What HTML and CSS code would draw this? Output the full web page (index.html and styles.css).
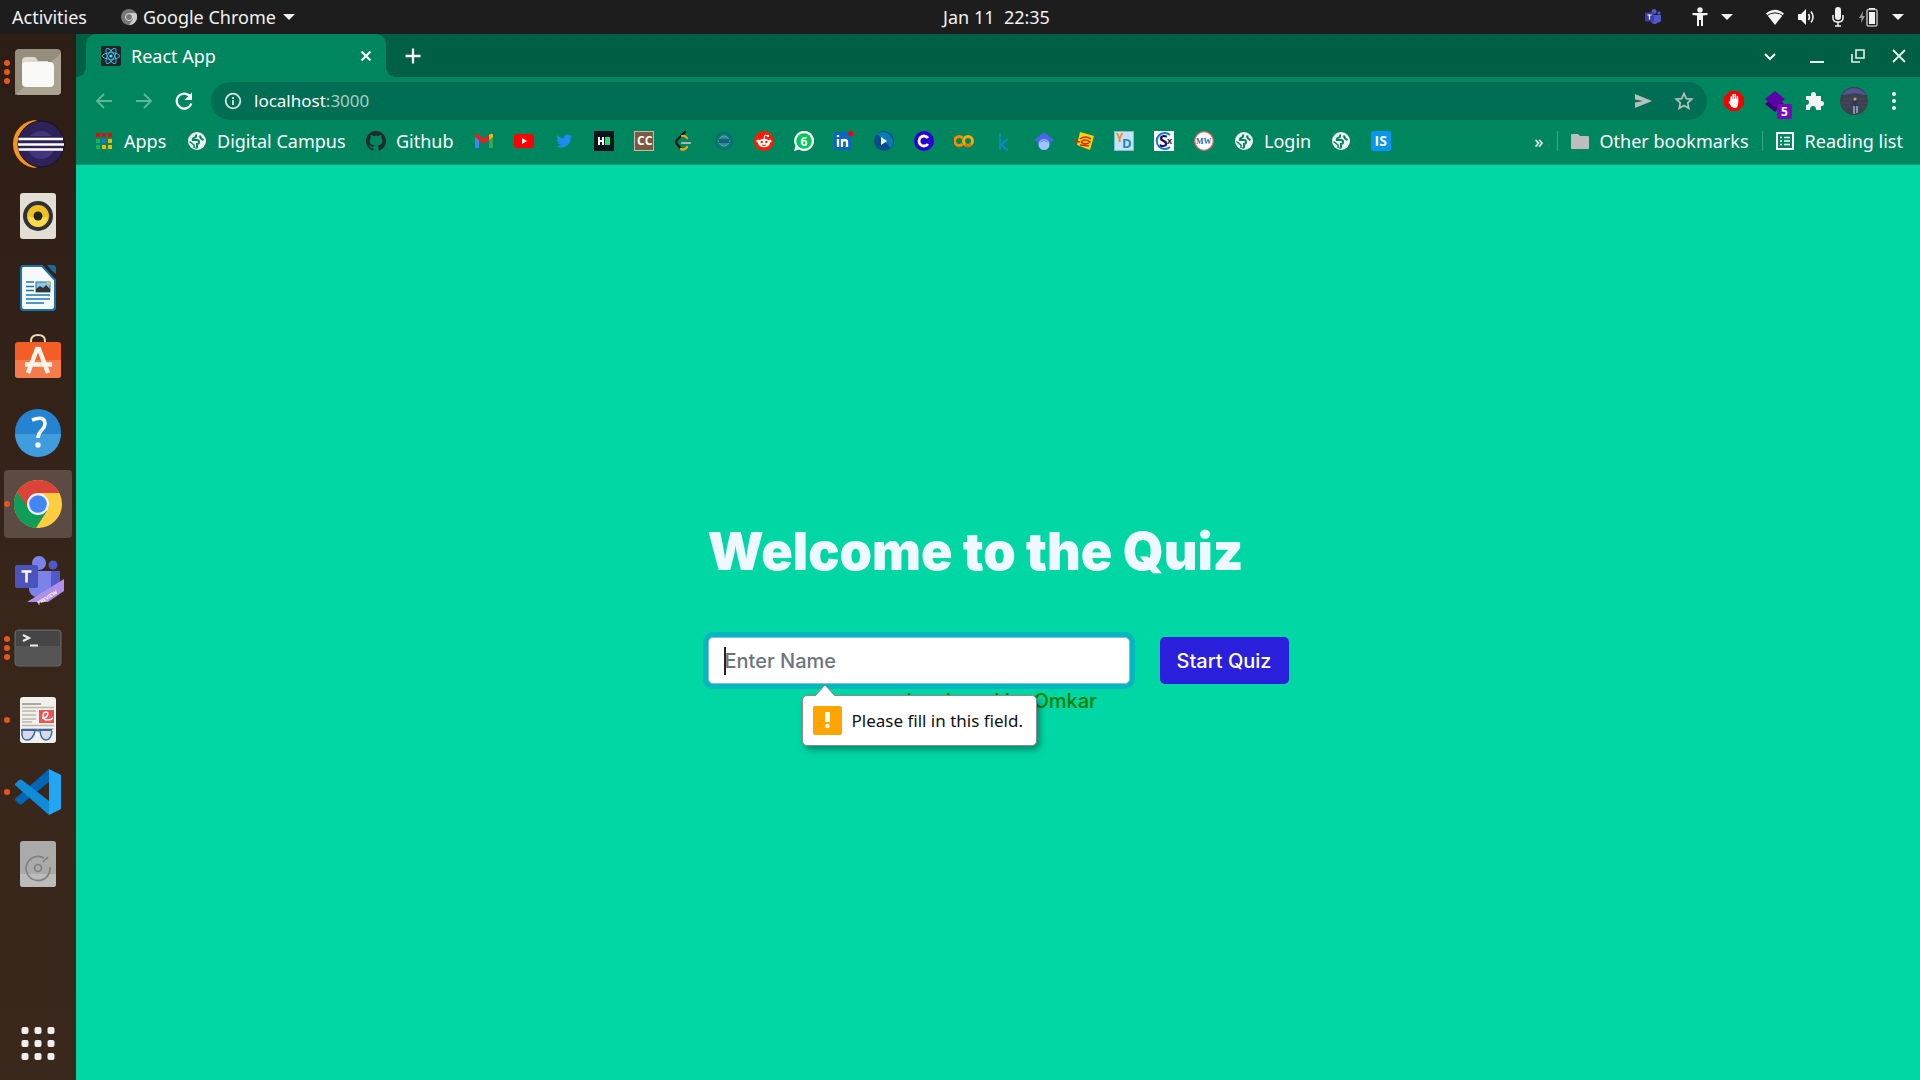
FILE: index.html
```html
<!DOCTYPE html>
<html lang="en">
<head>
<meta charset="utf-8">
<meta name="viewport" content="width=device-width, initial-scale=1">
<title>React App</title>
<link rel="stylesheet" href="styles.css">
</head>
<body>
<svg class="defs" aria-hidden="true">
  <symbol id="globe" viewBox="0 0 20 20"><circle cx="10" cy="10" r="9" fill="#f1f3f4"/><path d="M9 3.500Q9.500 6 8 6.500Q5.500 7 6 9h4q2 0 2 2t-2 2v2.500Q10 17 8.500 17M13 4.500q0 3 3.500 4.500" fill="none" stroke="#00865f" stroke-width="2"/><path d="M2.500 10.500L7 14v3" fill="none" stroke="#00865f" stroke-width="1.500"/></symbol>
  <symbol id="caret" viewBox="0 0 14 8"><path d="M1 1h12L7 7z" fill="#f2f2f2"/></symbol>
</svg>
<header class="topbar">
  <div class="topbar-left">
    <button class="plain">Activities</button>
    <button class="plain app-menu">
      <svg width="16" height="16" viewBox="0 0 16 16"><circle cx="8" cy="8" r="8" fill="#777"/><path d="M8 4h7a8 8 0 0 1-7 12l4-6z" fill="#ccc"/><circle cx="8" cy="8" r="3.500" fill="#777" stroke="#ddd" stroke-width="1"/></svg>
      Google Chrome
      <svg width="14" height="8"><use href="#caret"/></svg>
    </button>
  </div>
  <time class="clock">Jan 11&nbsp; 22:35</time>
  <div class="status">
    <svg width="16" height="16" viewBox="0 0 16 16"><circle cx="9" cy="2.500" r="2.500" fill="#5059c9"/><circle cx="14" cy="4" r="1.700" fill="#4b53bc"/><path d="M6 6h10v5q0 3-3 2.500Q9 17 6 13z" fill="#5059c9"/><rect y="3.500" width="9" height="9" rx="1" fill="#3940ab"/><path d="M2.500 6h4M4.500 6v4.500" stroke="#fff" stroke-width="1.200"/></svg>
    <div class="status-group">
      <svg width="16" height="20" viewBox="0 0 16 20" fill="#f2f2f2"><circle cx="8" cy="3" r="2.700"/><path d="M.500 6h15v2L11 8.500V19H9v-6H7v6H5V8.500L.500 8z"/></svg>
      <svg width="14" height="8"><use href="#caret"/></svg>
    </div>
    <div class="status-group">
      <svg width="20" height="18" viewBox="0 0 20 18"><path d="M1 5.500Q10-2 19 5.500L10 17z" fill="#f2f2f2"/><path d="M1 6.200Q10-.500 19 6.200" stroke="#1d1d1d" stroke-width="1" fill="none" transform="translate(0 2)"/></svg>
      <svg width="20" height="18" viewBox="0 0 20 18"><path d="M1 6h3l5-5v16l-5-5H1z" fill="#f2f2f2"/><path d="M11.500 6q2 3 0 6M14 3.500q4 5.500 0 11" fill="none" stroke="#f2f2f2" stroke-width="1.600"/></svg>
      <svg width="18" height="20" viewBox="0 0 18 20"><rect x="6" y="0" width="6" height="13" rx="3" fill="#f2f2f2"/><path d="M4 8v3q0 4 5 4t5-4V8M9 15v4M6 19h6" fill="none" stroke="#f2f2f2" stroke-width="1.500"/></svg>
      <svg width="20" height="20" viewBox="0 0 20 20"><path d="M4 4L0 11h2.500L2 16l4-7H3.500z" fill="#999"/><rect x="8" y="2.500" width="10" height="16.500" rx="1.500" fill="none" stroke="#bbb" stroke-width="1.500"/><path d="M10 1h6v1.500h-6zM10 5h6v12h-6z" fill="#f2f2f2"/></svg>
      <svg width="14" height="8"><use href="#caret"/></svg>
    </div>
  </div>
</header>
<div class="desktop">
  <nav class="dock" aria-label="Dock">
    <button class="dock-item dots-3" aria-label="Files"><svg viewBox="0 0 76 68"><rect x="15" y="11" width="46" height="46" rx="4" fill="#958e7c"/><path d="M15 57L61 15v38q0 4-4 4H19q-4 0-4-4z" fill="#aaa391"/><path d="M22 24q0-5 4-5h8q2 0 4 4h10v8H22z" fill="#dedad0"/><path d="M22 28q0-4 4-4h24q4 0 4 4v17q0 4-4 4H26q-4 0-4-4z" fill="#f9f9f8"/></svg></button>
    <button class="dock-item" aria-label="Eclipse"><svg viewBox="0 0 76 68"><path d="M37 10A24 24 0 0 0 37 58A30 30 0 0 1 37 10" fill="#f7941e"/><circle cx="41" cy="34" r="23" fill="#2c2255" stroke="#17122c"/><circle cx="41" cy="35" r="14" fill="#43347d"/><path d="M18 26h45v15H18z" fill="#2c2255"/><path d="M18.500 29h44.500M18 34.500h46M18.500 39.500h44.500" stroke="#fff" stroke-width="2.600"/></svg></button>
    <button class="dock-item" aria-label="Rhythmbox"><svg viewBox="0 0 76 68"><rect x="20" y="11" width="36" height="46" rx="3" fill="#e3dfd4"/><circle cx="38" cy="34" r="15" fill="#303038"/><circle cx="38" cy="34" r="11" fill="#efc020"/><path d="M28 35a10 10 0 0 0 20 0z" fill="#f9da4a"/><circle cx="38" cy="34" r="4.500" fill="#222"/></svg></button>
    <button class="dock-item" aria-label="LibreOffice Writer"><svg viewBox="0 0 76 68"><path d="M23 12h19l13 14v27q0 3-3 3H24q-3 0-3-3V15q0-3 2-3z" fill="#f7f8f9" stroke="#1973a8" stroke-width="2"/><path d="M47 11h6q3 0 3 3v6q-5-3-9-9z" fill="#176da1"/><path d="M26 28h8M26 32.500h8M26 36.500h8M26 41h24M26 45h24M26 49h18" stroke="#1979b3" stroke-width="1.700"/><rect x="36" y="28" width="14" height="10" fill="#8bc6e8" stroke="#1979b3"/><path d="M36 38v-3l4-3 3 2 3-3 4 4v3z" fill="#333"/><path d="M46 28h4v4z" fill="#f0c51d"/></svg></button>
    <button class="dock-item" aria-label="Ubuntu Software"><svg viewBox="0 0 76 68"><path d="M31 17v-2q0-6 7-6t7 6v2" fill="none" stroke="#ecd9ae" stroke-width="2"/><rect x="15" y="16" width="46" height="36" rx="3" fill="#f25e25"/><path d="M15 34h46v15q0 3-3 3H18q-3 0-3-3z" fill="#f57b4b"/><path d="M28 47L37 23h2l9 24M25 38.500h27" fill="none" stroke="#fff3eb" stroke-width="4.500"/></svg></button>
    <button class="dock-item" aria-label="Help"><svg viewBox="0 0 76 68"><circle cx="38" cy="34" r="23" fill="#2584d2"/><path d="M15 36a23 23 0 0 0 46 0z" fill="#3f9ddf"/><path d="M32 22q13-5 13 4c0 6-7 6-7 14" fill="none" stroke="#fff" stroke-width="3.500"/><circle cx="38" cy="47" r="2.700" fill="#fff"/></svg></button>
    <button class="dock-item active dots-1" aria-label="Google Chrome"><svg viewBox="0 0 76 68"><circle cx="38" cy="34" r="24" fill="#ffcd40"/><path d="M17.200 22A24 24 0 0 1 58.800 22L59 23H38L28 40z" fill="#db4437"/><path d="M17.200 22A24 24 0 0 0 36 58l11-17-18-2z" fill="#0f9d58"/><circle cx="38" cy="34" r="11" fill="#f1f1f1"/><circle cx="38" cy="34" r="8.800" fill="#4285f4"/></svg></button>
    <button class="dock-item" aria-label="Microsoft Teams"><svg viewBox="0 0 76 68"><circle cx="39" cy="21" r="7" fill="#7b83eb"/><circle cx="53" cy="23" r="4.500" fill="#5059c9"/><path d="M46 29h14v14q-2 10-10 10z" fill="#5059c9"/><path d="M29 29h22v13q0 14-12 14-10-2-10-9z" fill="#7b83eb"/><path d="M27 60L64 37v12L48 60z" fill="#b08fe8"/><text x="37" y="63" transform="rotate(-32 38 60)" font-family="Lato, sans-serif" font-size="5" font-weight="900" fill="#fff">PREVIEW</text><rect x="15" y="23" width="23" height="23" rx="2" fill="#4b53bc"/><path d="M21.500 29.500h10M26.500 29.500v11" stroke="#fff" stroke-width="2.500"/></svg></button>
    <button class="dock-item dots-3" aria-label="Terminal"><svg viewBox="0 0 76 68"><rect x="15" y="16" width="46" height="36" rx="3" fill="#555" stroke="#666"/><path d="M16 17h44v15H16z" fill="#454545"/><path d="M23 21l6 3-6 3M30 31.500h8" fill="none" stroke="#eee" stroke-width="2"/></svg></button>
    <button class="dock-item dots-1" aria-label="Document Viewer"><svg viewBox="0 0 76 68"><rect x="20" y="11" width="36" height="46" rx="3" fill="#f1f0ed"/><path d="M22 18h19" stroke="#99917d" stroke-width="1.500"/><path d="M22 21.500h32M22 25h14M22 29h14M22 33h14M22 36h10M22 39.500h32M22 43h32" stroke="#bbb6a9" stroke-width="1.300"/><rect x="39" y="24" width="15" height="13" fill="#ed5353"/><path d="M42 32c5 1 8-6 4-6s-4 8 1 8 4-1 6-2" fill="none" stroke="#fff" stroke-width="1.500"/><path d="M21 44h15q1 1 4 0h12" fill="none" stroke="#3468ad" stroke-width="2"/><path d="M22 45q-1 9 5 9t8-9M40 45q1 9 6 9t6-9" fill="#ccd" fill-opacity=".6" stroke="#3468ad" stroke-width="1.500"/></svg></button>
    <button class="dock-item dots-1" aria-label="Visual Studio Code"><svg viewBox="0 0 76 68"><path d="M15 42l4 4q1 1 3 0l27-22V11L16 40q-2 1-1 2z" fill="#0066b5"/><path d="M15 26l4-4q1-1 3 0l27 21v14L16 28q-2-1-1-2z" fill="#108bd8"/><path d="M49 11l12 6v34l-12 6z" fill="#24a5f4"/></svg></button>
    <button class="dock-item" aria-label="Disk"><svg viewBox="0 0 76 68"><rect x="20" y="11" width="36" height="46" rx="3" fill="#aaa"/><path d="M20 44h36v10q0 3-3 3H23q-3 0-3-3z" fill="#bbb"/><path d="M44 28a12 12 0 1 0 6 9M43 32l5-5" fill="none" stroke="#808080" stroke-width="1.700"/><circle cx="38" cy="38" r="3.500" fill="none" stroke="#808080" stroke-width="1.700"/></svg></button>
    <button class="dock-item show-apps" aria-label="Show Applications"><svg viewBox="0 0 76 68" fill="#f2f0ee"><g id="r"><rect x="21.500" y="19" width="7" height="7" rx="2"/><rect x="34.500" y="19" width="7" height="7" rx="2"/><rect x="47.500" y="19" width="7" height="7" rx="2"/></g><use href="#r" y="13"/><use href="#r" y="26"/></svg></button>
  </nav>
  <div class="browser">
    <div class="tabstrip">
      <div class="tab">
        <svg width="20" height="20" viewBox="0 0 20 20"><rect width="20" height="20" rx="2" fill="#20232a"/><g fill="none" stroke="#40b8d8" stroke-width="1"><ellipse cx="10" cy="10" rx="8.500" ry="3.300"/><ellipse cx="10" cy="10" rx="8.500" ry="3.300" transform="rotate(60 10 10)"/><ellipse cx="10" cy="10" rx="8.500" ry="3.300" transform="rotate(120 10 10)"/></g><circle cx="10" cy="10" r="1.600" fill="#61dafb"/></svg>
        <span class="tab-title">React App</span>
        <button class="plain" aria-label="Close tab"><svg width="12" height="12" viewBox="0 0 12 12"><path d="M1.500 1.500l9 9M10.500 1.500l-9 9" stroke="#fff" stroke-width="2"/></svg></button>
      </div>
      <button class="plain new-tab" aria-label="New tab"><svg width="16" height="16" viewBox="0 0 16 16"><path d="M8 .500v15M.500 8h15" stroke="#fff" stroke-width="2.300"/></svg></button>
      <div class="window-controls">
        <button class="plain" aria-label="Search tabs"><svg width="14" height="14" viewBox="0 0 14 14"><path d="M2 5l5 5 5-5" fill="none" stroke="#fff" stroke-width="2"/></svg></button>
        <button class="plain minimise" aria-label="Minimise"><svg width="14" height="14" viewBox="0 0 14 14"><path d="M0 13h14" stroke="#e4efeb" stroke-width="2"/></svg></button>
        <button class="plain" aria-label="Restore"><svg width="14" height="14" viewBox="0 0 14 14"><path d="M5 1h8v8H5zM1 5v8h8" fill="none" stroke="#e4efeb" stroke-width="1.600"/></svg></button>
        <button class="plain" aria-label="Close"><svg width="14" height="14" viewBox="0 0 14 14"><path d="M1 1l12 12M13 1L1 13" stroke="#e4efeb" stroke-width="1.800"/></svg></button>
      </div>
    </div>
    <div class="toolbar">
      <div class="tools">
        <button class="tool" aria-label="Back"><svg viewBox="0 0 28 28"><path d="M22 14H7M14 7l-7 7 7 7" fill="none" stroke="#5bb89c" stroke-width="1.800"/></svg></button>
        <button class="tool" aria-label="Forward"><svg viewBox="0 0 28 28"><path d="M6 14h15M14 7l7 7-7 7" fill="none" stroke="#5bb89c" stroke-width="1.800"/></svg></button>
        <button class="tool" aria-label="Reload"><svg viewBox="0 0 28 28"><path d="M20.500 10a7.500 7.500 0 1 0 .800 6.500" fill="none" stroke="#fff" stroke-width="2.200"/><path d="M22 5.500V13h-7.500z" fill="#fff"/></svg></button>
      </div>
      <div class="address">
        <svg width="18" height="18" viewBox="0 0 18 18"><circle cx="9" cy="9" r="7.300" fill="none" stroke="#d5e8e2" stroke-width="1.800"/><path d="M9 8v5M9 5v2" stroke="#d5e8e2" stroke-width="1.800"/></svg>
        <span class="url">localhost<span class="port">:3000</span></span>
        <svg width="18" height="18" viewBox="0 0 18 18"><path d="M1 2l17 7L1 16v-5.500L9 9 1 7.500z" fill="#b8bfbd"/></svg>
        <svg width="20" height="20" viewBox="0 0 20 20"><path d="M10 2.500l2.300 5.100 5.500.600-4.100 3.700 1.100 5.400-4.800-2.700-4.800 2.700 1.100-5.400-4.100-3.700 5.500-.600z" fill="none" stroke="#b8bfbd" stroke-width="1.700"/></svg>
      </div>
      <div class="tools">
        <button class="tool" aria-label="Ad blocker"><svg viewBox="0 0 28 28"><path d="M10 4h8l6 6v8l-6 6h-8l-6-6v-8z" fill="#f70000"/><path d="M11.200 14v-4M13.200 14V7.500M15.300 14V7.500M17.400 15v-5.500M12 19l-2.500-4" stroke="#fff" stroke-width="1.600" stroke-linecap="round"/><path d="M10.400 12h7.800v5q-.500 4-3.500 4-3 0-4.300-4z" fill="#fff"/></svg></button>
        <button class="tool" aria-label="Layers extension"><svg viewBox="0 0 28 28"><path d="M5 17l10 8 9-8-9-9z" fill="#3b0379"/><path d="M5 12l10-8 10 8-10 8z" fill="#5c00a8"/></svg><span class="badge">5</span></button>
        <button class="tool" aria-label="Extensions"><svg viewBox="0 0 28 28"><path d="M6 9h5V8q0-3 2.500-3T16 8v1h5v5h1q2 0 2 2.500T22 19h-1v4h-5q0-4-3-4t-3 4H6v-5q3 0 3-3t-3-2z" fill="#f1f3f4"/></svg></button>
        <button class="tool" aria-label="Profile"><svg viewBox="0 0 28 28"><circle cx="14" cy="14" r="14" fill="#3d414f"/><path d="M2 8A14 14 0 0 1 26 8L15 6z" fill="#525594"/><path d="M3 12h22M1 16h26M3 20h22" stroke="#514b50" stroke-width="1"/><circle cx="15" cy="12" r="1.500" fill="#bc9a8b"/><path d="M12.500 14h5v5h-5z" fill="#273a60"/><path d="M14 19v8M17 19v7" stroke="#8ba4bd" stroke-width="1.700"/></svg></button>
        <button class="tool" aria-label="Menu"><svg viewBox="0 0 28 28" fill="#f1f3f4"><circle cx="14" cy="7" r="2"/><circle cx="14" cy="14" r="2"/><circle cx="14" cy="21" r="2"/></svg></button>
      </div>
    </div>
    <nav class="bookmarks" aria-label="Bookmarks">
      <a href="#" class="bm w-apps"><svg viewBox="0 0 20 20"><path d="M2 2h4v4H2zM8 2h4v4H8zM14 2h4v4h-4z" fill="#f00"/><path d="M2 8h4v4H2zM2 14h4v4H2z" fill="#18b45b"/><path d="M8 8h4v4H8z" fill="#1a73e8"/><path d="M14 8h4v4h-4zM8 14h4v4H8zM14 14h4v4h-4z" fill="#fbb400"/></svg>Apps</a>
      <a href="#" class="bm w-campus"><svg><use href="#globe"/></svg>Digital Campus</a>
      <a href="#" class="bm w-github"><svg viewBox="0 0 16 16"><path d="M8 0C3.580 0 0 3.580 0 8c0 3.540 2.290 6.530 5.470 7.590.400.070.550-.170.550-.380 0-.190-.010-.820-.010-1.490-2.010.370-2.530-.490-2.690-.940-.090-.230-.480-.940-.820-1.130-.280-.150-.680-.520-.010-.530.630-.010 1.080.580 1.230.820.720 1.210 1.870.870 2.330.660.070-.520.280-.870.510-1.070-1.780-.200-3.640-.890-3.640-3.950 0-.870.310-1.590.820-2.150-.080-.200-.360-1.020.080-2.120 0 0 .670-.210 2.200.820.640-.180 1.320-.270 2-.270s1.360.090 2 .270c1.530-1.040 2.200-.820 2.200-.820.440 1.100.160 1.920.080 2.120.510.560.820 1.270.820 2.150 0 3.070-1.870 3.750-3.650 3.950.290.250.540.730.540 1.480 0 1.070-.010 1.930-.010 2.200 0 .210.150.460.550.380A8.010 8.010 0 0 0 16 8c0-4.420-3.580-8-8-8z" fill="#24292e"/></svg>Github</a>
      <a href="#" class="bm" aria-label="Gmail"><svg viewBox="0 0 20 20"><path d="M1 5l4 3v9H2q-1 0-1-1z" fill="#4285f4"/><path d="M19 5l-4 3v9h3q1 0 1-1z" fill="#34a853"/><path d="M1 4q2-3 4 0l5 4 5-4v5l-5 4-5-4-4-3z" fill="#ea2020"/><path d="M15 4q4-3 4 1v1l-4 3z" fill="#fbbc04"/></svg></a>
      <a href="#" class="bm" aria-label="YouTube"><svg viewBox="0 0 20 20"><rect y="3" width="20" height="14" rx="3" fill="#f00"/><path d="M8 7l5 3-5 3z" fill="#fff"/></svg></a>
      <a href="#" class="bm" aria-label="Twitter"><svg viewBox="0 0 24 24"><path d="M22 6c-.800.300-1.500.500-2.300.600.800-.500 1.400-1.300 1.700-2.200-.800.500-1.600.800-2.500 1A4 4 0 0 0 12 9C8.700 8.800 5.800 7.200 3.900 4.800c-1 1.800-.500 4.100 1.200 5.300-.600 0-1.200-.200-1.800-.500 0 1.900 1.300 3.600 3.200 4-.600.200-1.200.200-1.800.100.500 1.600 2 2.700 3.700 2.800A8 8 0 0 1 2.500 18 11.400 11.400 0 0 0 20 8c.800-.500 1.500-1.200 2-2z" fill="#1d8cf0"/></svg></a>
      <a href="#" class="bm" aria-label="HackerEarth"><svg viewBox="0 0 20 20"><rect width="20" height="20" fill="#0e141e"/><path d="M5 6v8M9 6v8M5 10h4" stroke="#fff" stroke-width="2"/><path d="M11 6h5v8h-5z" fill="#1de065"/></svg></a>
      <a href="#" class="bm" aria-label="CodeChef"><svg viewBox="0 0 20 20"><rect x=".500" y=".500" width="19" height="19" fill="#795b43" stroke="#cbb9a7"/><text x="3" y="14" class="glyph" font-size="12" fill="#fff">CC</text></svg></a>
      <a href="#" class="bm" aria-label="LeetCode"><svg viewBox="0 0 20 20" fill="none" stroke-width="2.200" stroke-linecap="round"><path d="M11 1L3 9q-2 2 0 4l4 5" stroke="#111"/><path d="M8 5q3-1 5 2M7 18q3 2 6-2" stroke="#ffa116"/><path d="M8 12h8" stroke="#b3b3b3"/></svg></a>
      <a href="#" class="bm" aria-label="College portal"><svg viewBox="0 0 20 20"><circle cx="10" cy="10" r="8.500" fill="#087a70" stroke="#087070" stroke-width="2"/><circle cx="10" cy="10" r="5" fill="#2b8c85" stroke="#6aa9a2"/><path d="M5 9h10M5 11h10" stroke="#175c84" stroke-width="2"/></svg></a>
      <a href="#" class="bm" aria-label="Reddit"><svg viewBox="0 0 20 20"><circle cx="10" cy="10" r="10" fill="#ff1a00"/><ellipse cx="10" cy="12" rx="6" ry="4.200" fill="#fff"/><circle cx="4" cy="10" r="1.600" fill="#fff"/><circle cx="16" cy="10" r="1.600" fill="#fff"/><path d="M10 8l1-4 3 1" fill="none" stroke="#fff"/><circle cx="14" cy="5" r="1.200" fill="#fff"/><circle cx="7.700" cy="11" r="1.200" fill="#f20"/><circle cx="12.300" cy="11" r="1.200" fill="#f20"/><path d="M8 14q2 1 4 0" fill="none" stroke="#f20"/></svg></a>
      <a href="#" class="bm" aria-label="WhatsApp"><svg viewBox="0 0 20 20"><path d="M0 20l1.500-5A10 10 0 1 1 5 18.500z" fill="#fff"/><circle cx="10" cy="10" r="7.800" fill="#00c957"/><text x="6.500" y="14.500" class="glyph" font-size="12" fill="#fff">6</text></svg></a>
      <a href="#" class="bm" aria-label="LinkedIn"><svg viewBox="0 0 20 20"><rect y="1" width="18" height="18" rx="1" fill="#0a66c2"/><path d="M4 8v8M4 4v2M8 8v8M8 11q0-2 2.500-2t2.500 2v5" fill="none" stroke="#fff" stroke-width="2.300"/><circle cx="17" cy="2.500" r="2.600" fill="#f00"/></svg></a>
      <a href="#" class="bm" aria-label="Video lectures"><svg viewBox="0 0 20 20"><circle cx="10" cy="10" r="10" fill="#0a4b8c"/><path d="M3 3a10 10 0 0 1 14 14z" fill="#087bb8"/><path d="M7 6l6 4-6 4z" fill="#fff"/></svg></a>
      <a href="#" class="bm" aria-label="Coursera"><svg viewBox="0 0 20 20"><circle cx="10" cy="10" r="10" fill="#2a00d4"/><path d="M14 7a5 5 0 1 0 0 6" fill="none" stroke="#fff" stroke-width="2.800"/></svg></a>
      <a href="#" class="bm" aria-label="Colab"><svg viewBox="0 0 20 20" fill="none" stroke-width="3"><path d="M8.500 7a4.500 4.500 0 1 0 0 6" stroke="#f98b00"/><circle cx="14" cy="10" r="4.500" stroke="#f9ab00"/><path d="M11 13.500a4.500 4.500 0 0 0 6 0" stroke="#e8710a"/></svg></a>
      <a href="#" class="bm" aria-label="Kaggle"><svg viewBox="0 0 20 20"><path d="M6 2v17M14 8l-7 6 7 5" fill="none" stroke="#078ccd" stroke-width="1.700"/></svg></a>
      <a href="#" class="bm" aria-label="Google Scholar"><svg viewBox="0 0 20 20"><path d="M0 9l10-8 10 8-5 4H5z" fill="#4667e8"/><circle cx="10" cy="13.500" r="5.500" fill="#a0c3ff"/><path d="M5 12q5-6 10 0l-5-2z" fill="#6389ed"/></svg></a>
      <a href="#" class="bm" aria-label="Yellow notes"><svg viewBox="0 0 20 20"><path d="M6 1l14 4-4 14-13-5z" fill="#fcd400"/><path d="M0 10l6 1M6 8q5-4 11 0M7 11q4-4 9 0-5 4-9 0M6 14l9 1" stroke="#d42b12" stroke-width="1.600" fill="none"/></svg></a>
      <a href="#" class="bm" aria-label="YD"><svg viewBox="0 0 20 20"><rect x=".500" y=".500" width="19" height="19" fill="#c5e3f6" stroke="#85b9da"/><text x="2" y="11" class="glyph" font-size="12" fill="#f09114">Y</text><text x="8" y="17" class="glyph" font-size="13" fill="#2484d0">D</text></svg></a>
      <a href="#" class="bm" aria-label="CSX"><svg viewBox="0 0 20 20"><rect width="20" height="20" fill="#fff"/><path d="M16 4a8 8 0 1 0 0 12" fill="none" stroke="#1878cd" stroke-width="2"/><text x="5" y="16" class="glyph" font-size="16" fill="#17136d">S</text><text x="13" y="13" class="glyph" font-size="9" fill="#333">x</text></svg></a>
      <a href="#" class="bm" aria-label="MW"><svg viewBox="0 0 20 20"><circle cx="10" cy="10" r="9.300" fill="#fff" stroke="#df6767" stroke-width="1.300"/><text x="2" y="13" font-family="Liberation Serif, serif" font-weight="700" font-size="8" fill="#2d67a6">MW</text></svg></a>
      <a href="#" class="bm w-login"><svg><use href="#globe"/></svg>Login</a>
      <a href="#" class="bm" aria-label="Website"><svg><use href="#globe"/></svg></a>
      <a href="#" class="bm" aria-label="IS"><svg viewBox="0 0 20 20"><rect width="20" height="20" rx="2.500" fill="#0795ef"/><text x="3.500" y="15" class="glyph" font-size="14" fill="#fff">IS</text></svg></a>
      <div class="bookmarks-end">
        <button class="plain more" aria-label="More bookmarks">»</button>
        <button class="bm plain folder"><svg viewBox="0 0 20 20"><path d="M1 4q0-1 1-1h6l2 2h8q1 0 1 1v11q0 1-1 1H2q-1 0-1-1z" fill="#bdbdbd"/></svg>Other bookmarks</button>
        <button class="bm plain reading"><svg viewBox="0 0 20 20"><path d="M2 2h16v16H2z" fill="none" stroke="#fff" stroke-width="2"/><path d="M5 6.500h2M5 10h2M5 13.500h2M9 6.500h6M9 10h6M9 13.500h6" stroke="#fff" stroke-width="1.600"/></svg>Reading list</button>
      </div>
    </nav>
    <main class="page">
      <form class="quiz" onsubmit="return false">
        <h1 class="title">Welcome to the Quiz</h1>
        <div class="entry">
          <div class="field">
            <input class="name" type="text" placeholder="Enter Name" aria-label="Enter Name" autocomplete="off">
            <div class="tooltip" role="alert"><svg width="24" height="12" viewBox="0 0 24 12" class="tip"><path d="M2 12L12 1l10 11" fill="#fff" stroke="#8a8a8a"/></svg><svg width="29" height="29" viewBox="0 0 29 29"><rect width="29" height="29" rx="2" fill="#ffa400"/><path d="M12 6h5v10h-5z" fill="#fff"/><circle cx="14.500" cy="20" r="2.200" fill="#fff"/></svg>Please fill in this field.</div>
          </div>
          <button class="start" type="submit">Start Quiz</button>
        </div>
        <p class="credit">developed by Omkar</p>
      </form>
    </main>
  </div>
</div>
</body>
</html>
```
FILE: styles.css
```css
* { box-sizing: border-box; }

body {
  margin: 0;
  min-height: 100vh;
  display: flex;
  flex-direction: column;
  font: 18px/24px "Noto Sans", sans-serif;
  color: #fff;
  background: #1d1d1d;
}

svg { display: block; flex: none; }
.defs { position: absolute; width: 0; height: 0; }
button { font: inherit; color: inherit; cursor: pointer; }

.plain {
  display: flex;
  align-items: center;
  padding: 0;
  border: 0;
  background: none;
}

.glyph { font-family: "Open Sans", sans-serif; font-weight: 700; }

/* Desktop top bar */
.topbar {
  display: grid;
  grid-template-columns: 1fr auto 1fr;
  align-items: center;
  height: 34px;
  padding: 0 15px 0 12px;
  color: #f2f2f2;
}
.topbar-left { display: flex; gap: 34px; }
.app-menu { gap: 6px; }
.clock { margin-left: 76px; }
.status { display: flex; align-items: center; justify-content: flex-end; gap: 31px; }
.status-group { display: flex; align-items: center; gap: 12px; }

.desktop { flex: 1; display: flex; }

/* Dock */
.dock {
  width: 76px;
  flex: none;
  display: flex;
  flex-direction: column;
  align-items: center;
  gap: 4px;
  padding: 4px 0;
  background: linear-gradient(#2c1d15, #39261b 60%, #3b281d);
}
.dock-item {
  position: relative;
  display: flex;
  justify-content: center;
  width: 68px;
  height: 68px;
  padding: 0;
  border: 0;
  border-radius: 4px;
  background: none;
}
.dock-item svg { width: 76px; height: 68px; }
.dock-item.active { background: #5b4b43; }
.show-apps { margin-top: auto; }
.dots-1::before,
.dots-3::before {
  content: "";
  position: absolute;
  left: 0;
  top: 31px;
  width: 6px;
  height: 6px;
  border-radius: 50%;
  background: #e95420;
}
.dots-3::before { box-shadow: 0 -9px #e95420, 0 9px #e95420; }

/* Browser chrome */
.browser {
  flex: 1;
  min-width: 0;
  display: flex;
  flex-direction: column;
  background: #00865f;
}
.tabstrip {
  display: flex;
  align-items: center;
  height: 43px;
  padding: 0 14px 0 10px;
  background: #006045;
}
.tab {
  position: relative;
  display: flex;
  align-items: center;
  gap: 10px;
  width: 300px;
  height: 43px;
  padding: 0 14px 0 15px;
  border-radius: 10px 10px 0 0;
  background: #00865f;
}
.tab::before,
.tab::after {
  content: "";
  position: absolute;
  bottom: 0;
  width: 10px;
  height: 10px;
}
.tab::before { left: -10px; background: radial-gradient(circle at 0 0, #006045 10px, #00865f 10px); }
.tab::after { right: -10px; background: radial-gradient(circle at 100% 0, #006045 10px, #00865f 10px); }
.tab-title { flex: 1; }
.new-tab { margin-left: 19px; }
.window-controls { display: flex; align-items: center; gap: 27px; margin-left: auto; }
.window-controls .minimise { margin-left: 6px; }

.toolbar {
  display: flex;
  align-items: center;
  gap: 13px;
  padding: 5px 12px 0 14px;
}
.tools { display: flex; gap: 12px; }
.tool {
  position: relative;
  width: 28px;
  height: 28px;
  padding: 0;
  border: 0;
  background: none;
}
.badge {
  position: absolute;
  left: 17px;
  top: 17px;
  width: 15px;
  height: 15px;
  border-radius: 2px;
  background: #7b08b8;
  font: 700 12px/15px "Open Sans", sans-serif;
  text-align: center;
}
.address {
  flex: 1;
  display: flex;
  align-items: center;
  gap: 22px;
  height: 38px;
  padding: 0 13px;
  border-radius: 19px;
  background: #006e52;
}
.url { flex: 1; margin-left: -10px; font-size: 17px; }
.port { color: #a8cfc3; }

.bookmarks {
  display: flex;
  align-items: center;
  gap: 20px;
  height: 45px;
  padding: 0 17px 2px 18px;
  border-bottom: 1px solid #1a9470;
}
.bm {
  display: flex;
  align-items: center;
  gap: 10px;
  color: #fff;
  text-decoration: none;
  white-space: nowrap;
}
.bm svg { width: 20px; height: 20px; }
.w-apps { width: 73px; }
.w-campus { width: 159px; }
.w-github { width: 88px; }
.w-login { width: 77px; }
.bookmarks-end { display: flex; align-items: center; gap: 13px; margin-left: auto; }
.folder,
.reading { padding-left: 13px; background: linear-gradient(#38a785, #38a785) left / 1px 20px no-repeat; }

/* Quiz page */
.page {
  flex: 1;
  display: flex;
  align-items: center;
  justify-content: center;
  padding-bottom: 5px;
  background: #00d7a5;
  font-family: Inter, sans-serif;
  font-size: 20px;
  font-weight: 500;
}
.quiz { width: 581px; max-width: 100%; }
.title {
  margin: 0 0 55px;
  font-size: 52px;
  line-height: 60px;
  font-weight: 900;
  color: #f0f8ff;
  white-space: nowrap;
}
.entry { display: flex; gap: 30px; }
.field { position: relative; flex: 1; }
.field::before {
  content: "";
  position: absolute;
  left: 16px;
  top: 10px;
  width: 2px;
  height: 28px;
  background: #212529;
}
.name {
  display: block;
  width: 100%;
  height: 47px;
  padding: 0 16px;
  border: 1px solid #86b7fe;
  border-radius: 5px;
  outline: 0;
  background: #fff;
  box-shadow: 0 0 0 5px #03b8bc;
  font: inherit;
  color: #212529;
}
.name::placeholder { color: #6c757d; opacity: 1; }
.start {
  width: 129px;
  height: 47px;
  padding: 0;
  border: 0;
  border-radius: 5px;
  background: #2a1fdb;
  white-space: nowrap;
}
.tooltip {
  position: absolute;
  z-index: 1;
  left: 94px;
  top: 58px;
  display: flex;
  align-items: center;
  gap: 10px;
  width: 235px;
  height: 51px;
  padding: 0 10px;
  border: 1px solid #8a8a8a;
  border-radius: 5px;
  background: #fff;
  box-shadow: 3px 4px 6px rgba(0, 0, 0, .35);
  color: #111;
  font: 17px/24px "Noto Sans", sans-serif;
  white-space: nowrap;
}
.tip { position: absolute; left: 10px; top: -12px; }
.credit {
  margin: 0;
  line-height: 34px;
  text-align: center;
  color: #008000;
}
```
